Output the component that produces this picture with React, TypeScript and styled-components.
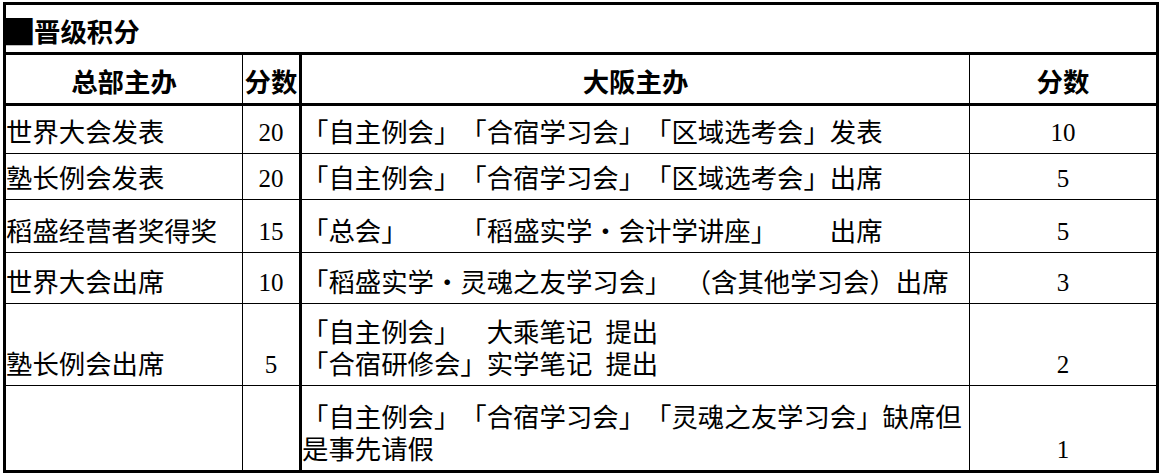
import React from "react";
import styled, { createGlobalStyle } from "styled-components";

const GlobalStyle = createGlobalStyle`
  body {
    margin: 0;
    background: #fff;
  }
`;

const Sheet = styled.div`
  display: grid;
  grid-template-columns: 237px 59px 668px 189px;
  grid-template-rows: 50px 51px 48px 46px 53px 51px 82px 87px;
  width: max-content;
  margin: 2px 0 0 3px;
  border-top: 3px solid #000;
  border-left: 3px solid #000;
  color: #000;
  font-family: "Noto Sans CJK SC", sans-serif;
  font-size: 26.4px;
  line-height: 32px;
  text-spacing-trim: space-all;
`;

type CellProps = {
  $thickRight?: boolean;
  $thickBottom?: boolean;
  $center?: boolean;
};

const Cell = styled.div<CellProps>`
  box-sizing: border-box;
  display: flex;
  flex-direction: column;
  justify-content: flex-end;
  align-items: ${(p) => (p.$center ? "center" : "flex-start")};
  padding-bottom: 6px;
  border-right: ${(p) => (p.$thickRight ? 3 : 1)}px solid #000;
  border-bottom: ${(p) => (p.$thickBottom ? 3 : 1)}px solid #000;
  white-space: nowrap;
  overflow: hidden;
`;

const TitleCell = styled(Cell)`
  grid-column: 1 / -1;
  font-weight: 700;
  padding-bottom: 5px;
  overflow: visible;
`;

const Mark = styled.span`
  display: inline-block;
  font-size: 34px;
  line-height: 24px;
  vertical-align: -3px;
  margin: 0 -2px 0 -4px;
`;

const HeadCell = styled(Cell)`
  font-weight: 700;
`;

const NumCell = styled(Cell)`
  font-family: "Liberation Serif", "Times New Roman", serif;
  font-size: 25px;
  padding-bottom: 4px;
`;

const Line = styled.span`
  display: block;
`;

const Gap = styled.span<{ $em: number }>`
  display: inline-block;
  width: ${(p) => p.$em}em;
`;

type Row = {
  hq: string;
  hqScore: string;
  osaka: React.ReactNode[];
  score: string;
  last?: boolean;
};

const rows: Row[] = [
  {
    hq: "世界大会发表",
    hqScore: "20",
    osaka: ["「自主例会」「合宿学习会」「区域选考会」发表"],
    score: "10",
  },
  {
    hq: "塾长例会发表",
    hqScore: "20",
    osaka: ["「自主例会」「合宿学习会」「区域选考会」出席"],
    score: "5",
  },
  {
    hq: "稻盛经营者奖得奖",
    hqScore: "15",
    osaka: [
      <>
        「总会」
        <Gap $em={2} />
        「稻盛实学・会计学讲座」
        <Gap $em={2} />
        出席
      </>,
    ],
    score: "5",
  },
  {
    hq: "世界大会出席",
    hqScore: "10",
    osaka: [
      <>
        「稻盛实学・灵魂之友学习会」
        <Gap $em={0.5} />
        （含其他学习会）出席
      </>,
    ],
    score: "3",
  },
  {
    hq: "塾长例会出席",
    hqScore: "5",
    osaka: [
      <>
        「自主例会」
        <Gap $em={1} />
        大乘笔记
        <Gap $em={0.5} />
        提出
      </>,
      <>
        「合宿研修会」实学笔记
        <Gap $em={0.5} />
        提出
      </>,
    ],
    score: "2",
  },
  {
    hq: "",
    hqScore: "",
    osaka: ["「自主例会」「合宿学习会」「灵魂之友学习会」缺席但", "是事先请假"],
    score: "1",
    last: true,
  },
];

export default function App() {
  return (
    <>
      <GlobalStyle />
      <Sheet>
        <TitleCell $thickRight $thickBottom>
          <span>
            <Mark>■</Mark>晋级积分
          </span>
        </TitleCell>

        <HeadCell $center $thickBottom>总部主办</HeadCell>
        <HeadCell $center $thickRight $thickBottom>分数</HeadCell>
        <HeadCell $center $thickBottom>大阪主办</HeadCell>
        <HeadCell $center $thickRight $thickBottom>分数</HeadCell>

        {rows.map((r, i) => (
          <React.Fragment key={i}>
            <Cell $thickBottom={r.last}>{r.hq}</Cell>
            <NumCell $center $thickRight $thickBottom={r.last}>
              {r.hqScore}
            </NumCell>
            <Cell $thickBottom={r.last}>
              {r.osaka.map((line, j) => (
                <Line key={j}>{line}</Line>
              ))}
            </Cell>
            <NumCell $center $thickRight $thickBottom={r.last}>
              {r.score}
            </NumCell>
          </React.Fragment>
        ))}
      </Sheet>
    </>
  );
}
